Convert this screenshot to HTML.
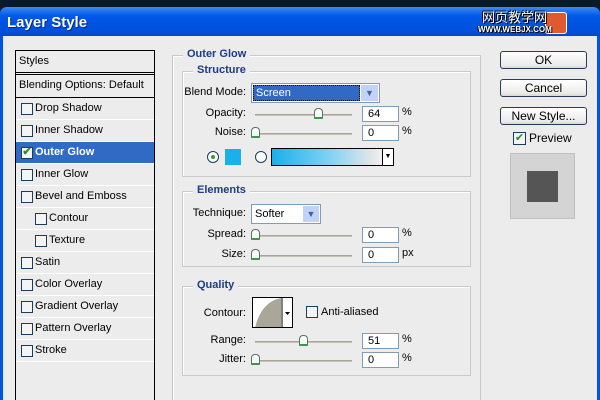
<!DOCTYPE html>
<html><head><meta charset="utf-8"><style>
*{margin:0;padding:0;box-sizing:border-box}
html,body{width:600px;height:400px;overflow:hidden}
body{background:#0a1a2a;font-family:"Liberation Sans",Arial,sans-serif;font-size:11px;color:#000;position:relative}
.a{position:absolute}
#win{left:0;top:7px;width:600px;height:393px;background:#0054e3;border-radius:7px 7px 0 0}
#title{left:0;top:7px;width:600px;height:30px;background:linear-gradient(#3d8bf5,#0058e6 30%,#0050dc 80%,#0a46c0);border-radius:7px 7px 0 0}
#tt{left:7px;top:14px;color:#fff;font-weight:bold;font-size:15px;text-shadow:1px 1px #0a2a80}
#body{left:3px;top:36px;width:594px;height:364px;background:#ececec}
#list{left:15px;top:50px;width:140px;height:350px;border:1px solid #000;border-bottom:none;background:#ececec}
.row{position:absolute;left:0;width:138px;height:22px;border-bottom:1px solid #fff;line-height:21px;padding-left:19px;white-space:nowrap}
.cb{position:absolute;left:5px;top:5px;width:12px;height:12px;border:1px solid #1c3c5c;background:#f4f4f4}
.sel{background:#316ac5;color:#fff;font-weight:bold}
fieldset{position:absolute;border:1px solid #c8c8c8;box-shadow:inset 1px 1px #fff}
.lg{position:absolute;background:#ececec;color:#1c3c84;font-weight:bold;padding:0 4px;font-size:11px}
.lbl{position:absolute;text-align:right;width:80px}
.inp{position:absolute;width:37px;height:16px;background:#fff;border:1px solid #7f9db9;padding-left:5px;line-height:15px}
.sl{position:absolute;height:2px;background:#c5c2b8;border-top:1px solid #a8a498}
.th{position:absolute;width:9px;height:11px;background:#f4fff4;border:1px solid #667;border-bottom:2px solid #3a9a4a;border-radius:4px 4px 1px 1px}
.btn{position:absolute;left:500px;width:87px;height:18px;border:1px solid #2a3a5a;border-radius:3px;background:linear-gradient(#fff,#ececec 80%,#d8d8d0);text-align:center;line-height:16px;font-size:12px}
</style></head><body>
<div class="a" id="win"></div>
<div class="a" id="title"></div>
<div class="a" id="tt">Layer Style</div>
<div class="a" style="left:545px;top:12px;width:22px;height:22px;background:#e05a30;border:1px solid #fff;border-radius:3px"></div>
<div class="a" style="left:482px;top:10px;color:#fff;font-family:'Noto Sans CJK SC',sans-serif;font-size:13px;line-height:14px;text-shadow:1px 1px #000,-1px -1px #000">网页教学网</div>
<div class="a" style="left:478px;top:25px;color:#fff;font-size:8px;font-weight:bold;text-shadow:1px 1px #000,-1px 0 #000">WWW.WEBJX.COM</div>
<div class="a" id="body"></div>

<div class="a" id="list">
<div class="row" style="top:0;padding-left:3px;border-bottom:3px double #000;height:24px">Styles</div>
<div class="row" style="top:24px;padding-left:3px;border-bottom:1px solid #000;height:23px">Blending Options: Default</div>
<div class="row" style="top:47px"><span class="cb"></span>Drop Shadow</div>
<div class="row" style="top:69px"><span class="cb"></span>Inner Shadow</div>
<div class="row sel" style="top:91px"><span class="cb" style="text-align:center;line-height:9px;color:#2a8a2a;font-size:11px">✔</span>Outer Glow</div>
<div class="row" style="top:113px"><span class="cb"></span>Inner Glow</div>
<div class="row" style="top:135px"><span class="cb"></span>Bevel and Emboss</div>
<div class="row" style="top:157px;padding-left:33px"><span class="cb" style="left:19px"></span>Contour</div>
<div class="row" style="top:179px;padding-left:33px"><span class="cb" style="left:19px"></span>Texture</div>
<div class="row" style="top:201px"><span class="cb"></span>Satin</div>
<div class="row" style="top:223px"><span class="cb"></span>Color Overlay</div>
<div class="row" style="top:245px"><span class="cb"></span>Gradient Overlay</div>
<div class="row" style="top:267px"><span class="cb"></span>Pattern Overlay</div>
<div class="row" style="top:289px"><span class="cb"></span>Stroke</div>
</div>

<fieldset style="left:172px;top:55px;width:309px;height:360px"></fieldset>
<div class="lg" style="left:183px;top:48px">Outer Glow</div>
<fieldset style="left:182px;top:71px;width:289px;height:106px"></fieldset>
<div class="lg" style="left:193px;top:64px">Structure</div>
<div class="lbl" style="left:166px;top:86px">Blend Mode:</div>
<div class="a" style="left:251px;top:83px;width:129px;height:20px;border:1px solid #7f9db9;background:#fff"></div>
<div class="a" style="left:253px;top:85px;width:107px;height:16px;background:#316ac5;color:#fff;padding-left:2px;line-height:15px;border:1px dotted #000">Screen</div>
<div class="a" style="left:361px;top:85px;width:17px;height:16px;background:#c1d3fb;color:#4d6185;text-align:center;font-size:9px;line-height:16px">▼</div>
<div class="lbl" style="left:166px;top:107px">Opacity:</div>
<div class="sl" style="left:255px;top:114px;width:97px"></div><div class="th" style="left:314px;top:108px"></div>
<div class="inp" style="left:362px;top:106px">64</div><div class="a" style="left:402px;top:106px">%</div>
<div class="lbl" style="left:166px;top:126px">Noise:</div>
<div class="sl" style="left:255px;top:133px;width:97px"></div><div class="th" style="left:251px;top:127px"></div>
<div class="inp" style="left:362px;top:125px">0</div><div class="a" style="left:402px;top:125px">%</div>
<div class="a" style="left:207px;top:151px;width:12px;height:12px;border-radius:50%;border:1px solid #1c3c5c;background:#fff"><div class="a" style="left:3px;top:3px;width:4px;height:4px;border-radius:50%;background:#3a9a3a"></div></div>
<div class="a" style="left:225px;top:149px;width:16px;height:16px;background:#1ab0ec"></div>
<div class="a" style="left:255px;top:151px;width:12px;height:12px;border-radius:50%;border:1px solid #1c3c5c;background:#fff"></div>
<div class="a" style="left:271px;top:148px;width:123px;height:18px;border:1px solid #000;background:linear-gradient(90deg,#1ab0ec,#7ad0f4 45%,#e8e8e8 85%,#fff)"></div>
<div class="a" style="left:382px;top:149px;width:11px;height:16px;background:#fff;border-left:1px solid #000;font-size:7px;text-align:center;line-height:16px">▼</div>

<fieldset style="left:182px;top:191px;width:289px;height:76px"></fieldset>
<div class="lg" style="left:193px;top:184px">Elements</div>
<div class="lbl" style="left:166px;top:207px">Technique:</div>
<div class="a" style="left:251px;top:204px;width:70px;height:20px;border:1px solid #7f9db9;background:#fff;padding:3px 0 0 3px">Softer</div>
<div class="a" style="left:303px;top:206px;width:16px;height:16px;background:#c1d3fb;color:#4d6185;text-align:center;font-size:9px;line-height:16px">▼</div>
<div class="lbl" style="left:166px;top:228px">Spread:</div>
<div class="sl" style="left:255px;top:235px;width:97px"></div><div class="th" style="left:251px;top:229px"></div>
<div class="inp" style="left:362px;top:227px">0</div><div class="a" style="left:402px;top:227px">%</div>
<div class="lbl" style="left:166px;top:248px">Size:</div>
<div class="sl" style="left:255px;top:255px;width:97px"></div><div class="th" style="left:251px;top:249px"></div>
<div class="inp" style="left:362px;top:247px">0</div><div class="a" style="left:402px;top:247px">px</div>

<fieldset style="left:182px;top:286px;width:289px;height:90px"></fieldset>
<div class="lg" style="left:193px;top:279px">Quality</div>
<div class="lbl" style="left:166px;top:307px">Contour:</div>
<div class="a" style="left:252px;top:297px;width:41px;height:31px;border:1px solid #000;background:#fff;overflow:hidden">
<svg width="40" height="30" style="position:absolute;left:0;top:0"><path d="M2 30 Q8 4 28 0 L28 30Z" fill="#aaa69a"/><line x1="29" y1="0" x2="29" y2="30" stroke="#000"/><path d="M32 14h5l-2.5 3z" fill="#000"/></svg></div>
<div class="a" style="left:306px;top:306px;width:12px;height:12px;border:1px solid #1c3c5c;background:#f4f4f4"></div>
<div class="a" style="left:321px;top:306px">Anti-aliased</div>
<div class="lbl" style="left:166px;top:334px">Range:</div>
<div class="sl" style="left:255px;top:341px;width:97px"></div><div class="th" style="left:299px;top:335px"></div>
<div class="inp" style="left:362px;top:333px">51</div><div class="a" style="left:402px;top:333px">%</div>
<div class="lbl" style="left:166px;top:353px">Jitter:</div>
<div class="sl" style="left:255px;top:360px;width:97px"></div><div class="th" style="left:251px;top:354px"></div>
<div class="inp" style="left:362px;top:352px">0</div><div class="a" style="left:402px;top:352px">%</div>

<div class="btn" style="top:51px">OK</div>
<div class="btn" style="top:79px">Cancel</div>
<div class="btn" style="top:107px">New Style...</div>
<div class="a" style="left:513px;top:132px;width:13px;height:13px;border:1px solid #1c3c5c;background:#f4f4f4;color:#2a8a2a;font-size:11px;line-height:11px;text-align:center">✔</div>
<div class="a" style="left:529px;top:131px;font-size:12px">Preview</div>
<div class="a" style="left:510px;top:153px;width:65px;height:66px;background:#d4d4d4;border:1px solid #c0c0c0"></div>
<div class="a" style="left:527px;top:171px;width:31px;height:31px;background:#555"></div>
<div class="a" style="left:597px;top:36px;width:3px;height:364px;background:#0054e3"></div>
<div class="a" style="left:0;top:36px;width:3px;height:364px;background:#0054e3"></div>
</body></html>
